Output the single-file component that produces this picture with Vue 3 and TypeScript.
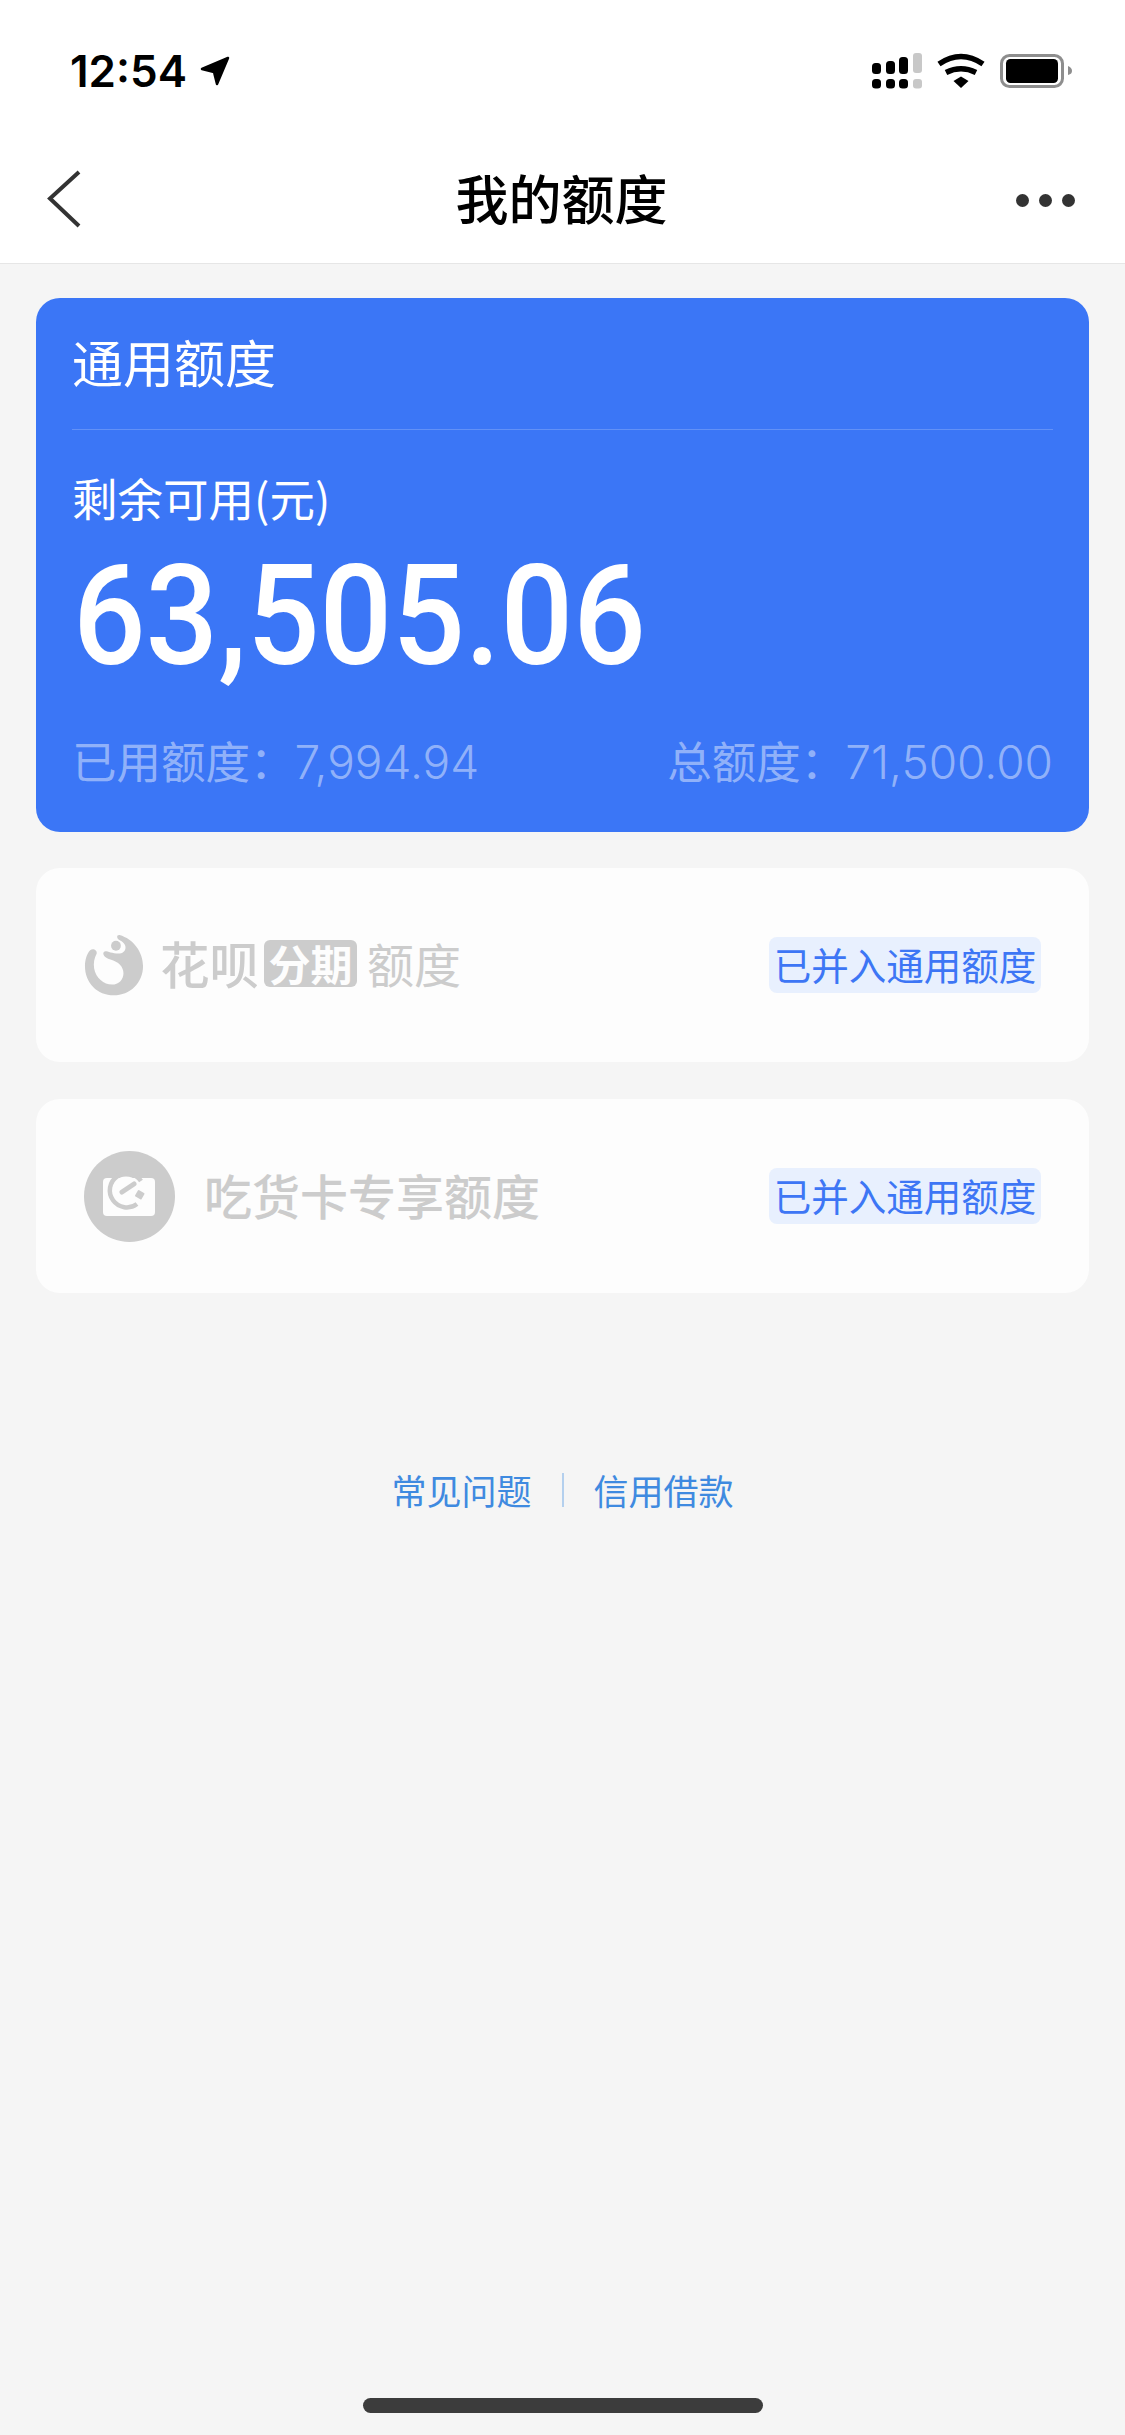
<script setup lang="ts">
const title = '我的额度'
const merged = '已并入通用额度'
const available = '63,505.06'
const used = '7,994.94'
const total = '71,500.00'
</script>

<template>
  <div class="page">
    <div class="status-bar">
      <div class="time-wrap">
        <span class="time">12:54</span>
        <svg class="arrow" width="32" height="32" viewBox="0 0 32 32">
          <path d="M29 3 L3 14 L15 17 L18 29 Z" fill="#000" stroke="#000" stroke-width="2.5" stroke-linejoin="round" />
        </svg>
      </div>
      <div class="status-icons">
        <svg width="50" height="36" viewBox="0 0 50 36">
          <g fill="#000">
            <rect x="0" y="10" width="9" height="11" rx="3.5" />
            <rect x="14" y="8" width="9" height="13" rx="3.5" />
            <rect x="27" y="4" width="9" height="17" rx="3.5" />
            <rect x="0" y="26" width="9" height="9.5" rx="3.5" />
            <rect x="14" y="26" width="9" height="9.5" rx="3.5" />
            <rect x="27" y="26" width="9" height="9.5" rx="3.5" />
          </g>
          <g fill="#c8c8c8">
            <rect x="41" y="0" width="9" height="20" rx="3" />
            <rect x="41" y="26" width="9" height="9.5" rx="3" />
          </g>
        </svg>
        <svg class="wifi" width="48" height="36" viewBox="0 0 48 36">
          <g fill="none" stroke="#000" stroke-width="5.5">
            <path d="M2 11 Q24 -4 46 11" />
            <path d="M9 19.500 Q24 12 39 19.500" />
          </g>
          <path d="M16.500 28 L24 23.500 L31.500 28 L24 35 Z" fill="#000" />
        </svg>
        <svg class="battery" width="72" height="34" viewBox="0 0 72 34">
          <rect x="1.500" y="1.500" width="61" height="31" rx="8" fill="none" stroke="#8e8e8e" stroke-width="3" />
          <rect x="6" y="5" width="52" height="24" rx="4.500" fill="#000" />
          <path d="M68 12 C71 13 72 15 72 17 C72 19 71 20 68 21 Z" fill="#8e8e8e" />
        </svg>
      </div>
    </div>

    <div class="nav">
      <div class="nav-left">
        <svg class="back" width="36" height="58" viewBox="0 0 36 58">
          <path d="M33 2 L4 28.500 L33 56" fill="none" stroke="#333" stroke-width="4" />
        </svg>
      </div>
      <div class="nav-title">{{ title }}</div>
      <div class="more">
        <i></i><i></i><i></i>
      </div>
    </div>

    <div class="content">
      <div class="main-card">
        <div class="main-head">通用额度</div>
        <div class="main-label">剩余可用(元)</div>
        <div class="main-amount">{{ available }}</div>
        <div class="main-foot">
          <span>已用额度：<em>{{ used }}</em></span>
          <span>总额度：<em>{{ total }}</em></span>
        </div>
      </div>

      <div class="sub-card">
        <div class="sub-left">
          <svg class="hb-icon" width="60" height="62" viewBox="70 40 182 190">
            <path
              d="M178 43 C220 55 250 95 250 138 C250 190 210 228 160 228 C110 228 72 190 72 138 C72 120 78 100 88 90 C95 82 110 88 108 100 C100 115 98 130 100 145 C105 175 130 195 155 195 C175 195 190 180 190 160 C190 140 175 125 150 118 C130 112 125 100 130 95 C135 88 150 100 175 100 C200 100 205 72 180 60 C168 54 168 42 178 43 Z"
              fill="#ccc"
            />
            <circle cx="167" cy="76" r="15" fill="#ccc" />
          </svg>
          <span class="hb-name">花呗</span>
          <span class="hb-tag">分期</span>
          <span class="hb-suffix">额度</span>
        </div>
        <span class="badge">{{ merged }}</span>
      </div>

      <div class="sub-card">
        <div class="sub-left">
          <svg class="food-icon" width="91" height="91" viewBox="0 0 91 91">
            <circle cx="45.500" cy="45.500" r="45.500" fill="#ccc" />
            <rect x="19" y="27" width="52" height="38" rx="4" fill="#fdfdfd" />
            <circle cx="42" cy="40.500" r="15" fill="#fdfdfd" />
            <path d="M57 30 A17 17 0 1 0 53 53" fill="none" stroke="#ccc" stroke-width="4.500" />
            <path d="M38 41 L50 33" fill="none" stroke="#ccc" stroke-width="5" stroke-linecap="round" />
            <rect x="52" y="40" width="7.500" height="7.500" rx="1" transform="rotate(30 55.750 43.750)" fill="#ccc" />
          </svg>
          <span class="food-name">吃货卡专享额度</span>
        </div>
        <span class="badge">{{ merged }}</span>
      </div>

      <div class="links">
        <span>常见问题</span>
        <i class="link-sep"></i>
        <span>信用借款</span>
      </div>
    </div>

    <div class="home-bar"></div>
  </div>
</template>

<style>
html,
body {
  margin: 0;
  background: #f5f5f5;
}
</style>

<style scoped>
.page {
  width: 1125px;
  height: 2435px;
  display: flex;
  flex-direction: column;
  background: #f5f5f5;
  font-family: 'Noto Sans CJK SC', 'Noto Sans', sans-serif;
  overflow: hidden;
}

.status-bar {
  height: 140px;
  box-sizing: border-box;
  padding: 53px 53px 0 70px;
  display: flex;
  justify-content: space-between;
  align-items: flex-start;
  background: #fff;
}

.time-wrap {
  display: flex;
  align-items: center;
  gap: 12px;
}

.time {
  font-family: Inter, 'Liberation Sans', sans-serif;
  font-size: 44px;
  line-height: 36px;
  font-weight: 600;
  color: #000;
}

.status-icons {
  display: flex;
  align-items: flex-start;
  margin-left: auto;
}

.wifi {
  margin-left: 15px;
}

.battery {
  margin-left: 15px;
  margin-top: 1px;
}

.nav {
  height: 124px;
  box-sizing: border-box;
  padding: 0 50px 0 46px;
  display: flex;
  align-items: center;
  justify-content: space-between;
  background: #fff;
  border-bottom: 1px solid #e6e6e6;
}

.nav-left {
  width: 61px;
  margin-bottom: 6px;
  display: flex;
}

.nav-title {
  margin-bottom: 10px;
  font-size: 53px;
  font-weight: 500;
  color: #000;
}

.more {
  width: 59px;
  margin-bottom: 3px;
  display: flex;
  gap: 10px;
}

.more i {
  width: 13px;
  height: 13px;
  border-radius: 50%;
  background: #333;
}

.content {
  padding: 34px 36px 0;
  display: flex;
  flex-direction: column;
}

.main-card {
  height: 534px;
  box-sizing: border-box;
  padding: 0 36px;
  border-radius: 24px;
  background: #3b76f6;
  color: #fff;
}

.main-head {
  height: 132px;
  box-sizing: border-box;
  border-bottom: 1px solid rgba(255, 255, 255, 0.2);
  font-size: 51px;
  line-height: 126px;
}

.main-label {
  margin-top: 37px;
  font-size: 45.500px;
  line-height: 60px;
}

.main-amount {
  height: 143px;
  margin-top: 18px;
  padding-left: 1px;
  font-family: Roboto, 'Liberation Sans', sans-serif;
  font-size: 139px;
  line-height: 143px;
  font-weight: 500;
  transform: scaleX(0.92);
  transform-origin: left center;
}

.main-foot {
  margin-top: 42px;
  display: flex;
  justify-content: space-between;
  font-size: 44.500px;
  line-height: 60px;
  color: rgba(255, 255, 255, 0.45);
}

.main-foot em {
  font-family: Inter, 'Liberation Sans', sans-serif;
  font-style: normal;
  font-size: 46px;
  font-weight: 300;
}

.sub-card {
  height: 194px;
  box-sizing: border-box;
  margin-top: 36px;
  padding: 0 48px;
  display: flex;
  align-items: center;
  justify-content: space-between;
  border-radius: 24px;
  background: #fdfdfd;
}

.sub-card + .sub-card {
  margin-top: 37px;
}

.sub-left {
  display: flex;
  align-items: center;
  color: #ccc;
}

.hb-name {
  margin-left: 16px;
  padding-bottom: 5px;
  font-size: 49.500px;
  line-height: 60px;
  font-weight: 500;
}

.hb-tag {
  margin-left: 5px;
  width: 93px;
  height: 47px;
  margin-bottom: 4px;
  border-radius: 6px;
  background: #ccc;
  color: #fdfdfd;
  font-size: 42px;
  line-height: 45px;
  font-weight: 700;
  text-align: center;
}

.hb-suffix {
  margin-left: 10px;
  padding-bottom: 5px;
  font-size: 47px;
  line-height: 60px;
}

.food-name {
  margin-left: 29px;
  padding-bottom: 5px;
  font-size: 48px;
  line-height: 60px;
  font-weight: 500;
}

.badge {
  width: 272px;
  height: 56px;
  box-sizing: border-box;
  border-radius: 8px;
  background: #e8f0fe;
  color: #3d76f5;
  font-size: 37.500px;
  line-height: 54px;
  text-align: center;
  white-space: nowrap;
}

.links {
  margin-top: 172px;
  display: flex;
  align-items: center;
  justify-content: center;
  gap: 30px;
  font-size: 35px;
  line-height: 50px;
  color: #3f8ae0;
}

.link-sep {
  width: 2px;
  height: 34px;
  background: #b4d0ee;
}

.home-bar {
  width: 400px;
  height: 15px;
  margin: auto auto 22px;
  border-radius: 8px;
  background: #3c3c3c;
}
</style>
